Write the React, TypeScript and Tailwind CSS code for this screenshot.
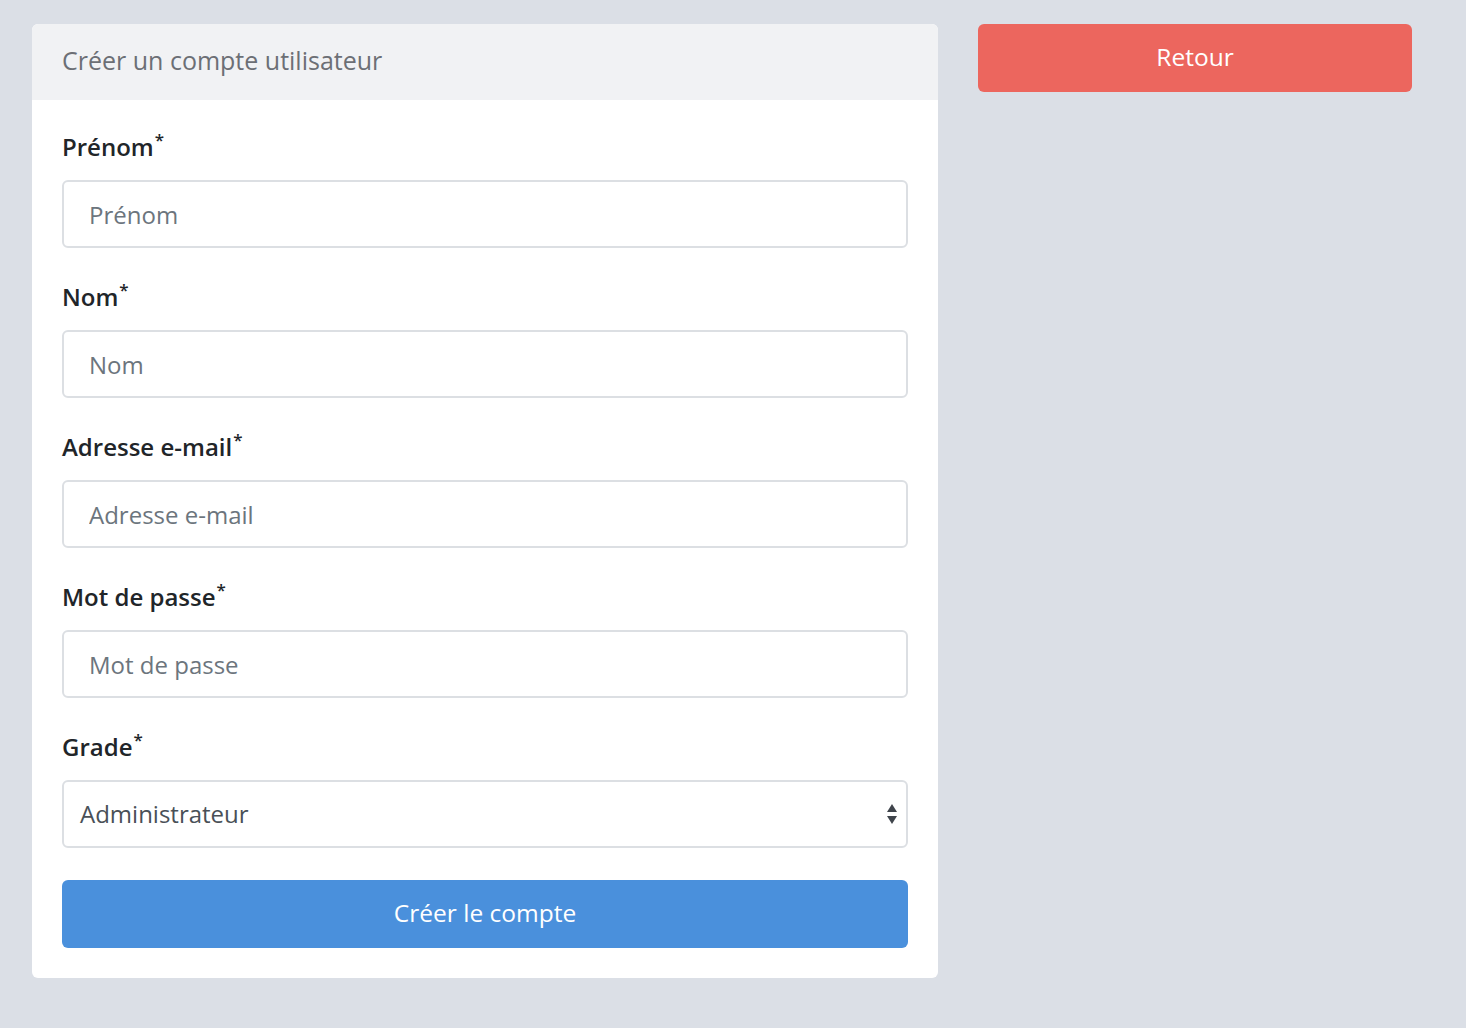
import React from "react";

const fields = [
  { label: "Prénom", placeholder: "Prénom", type: "text" },
  { label: "Nom", placeholder: "Nom", type: "text" },
  { label: "Adresse e-mail", placeholder: "Adresse e-mail", type: "email" },
  { label: "Mot de passe", placeholder: "Mot de passe", type: "text" },
];

function Label({ text }: { text: string }) {
  return (
    <label className="h-[34px] text-[24px] font-semibold text-[#212529] leading-[34px] mb-[16px]">
      {text}
      <span className="text-[17px] leading-none align-top relative top-[1px] font-semibold ml-[1px]">*</span>
    </label>
  );
}

export default function App() {
  return (
    <div
      className="min-h-[1028px] w-full bg-[#dbdfe6] px-[32px] pt-[24px] flex items-start gap-[40px]"
      style={{ fontFamily: '"Open Sans", "Noto Sans", sans-serif' }}
    >
      <div className="w-[906px] bg-white rounded-[6px] overflow-hidden">
        <div className="h-[76px] bg-[#f1f2f4] px-[30px] flex items-center text-[25px] text-[#6c6f75] pb-[2px]">
          Créer un compte utilisateur
        </div>
        <div className="px-[30px] pt-[30px] pb-[30px] flex flex-col">
          {fields.map((f) => (
            <div key={f.label} className="mb-[32px] flex flex-col">
              <Label text={f.label} />
              <input
                type={f.type}
                placeholder={f.placeholder}
                className="h-[68px] w-full border-2 border-[#dcdfe3] rounded-[6px] px-[25px] text-[24px] text-[#495057] placeholder:text-[#6c757d] outline-none"
              />
            </div>
          ))}
          <div className="mb-[32px] flex flex-col">
            <Label text="Grade" />
            <div className="relative h-[68px] w-full border-2 border-[#dcdfe3] rounded-[6px] pl-[16px] flex items-center text-[24px] text-[#495057]">
              Administrateur
              <svg
                className="absolute right-[8px] top-1/2 -translate-y-1/2"
                width="12"
                height="22"
                viewBox="0 0 12 22"
              >
                <polygon points="6,1 11,9 1,9" fill="#3f444b" />
                <polygon points="1,13 11,13 6,21" fill="#3f444b" />
              </svg>
            </div>
          </div>
          <button className="h-[68px] w-full bg-[#4a90dc] rounded-[6px] text-white text-[24.5px] pb-[2px]">
            Créer le compte
          </button>
        </div>
      </div>
      <button className="w-[434px] h-[68px] bg-[#ec665e] rounded-[6px] text-white text-[24.5px] pb-[2px]">
        Retour
      </button>
    </div>
  );
}
